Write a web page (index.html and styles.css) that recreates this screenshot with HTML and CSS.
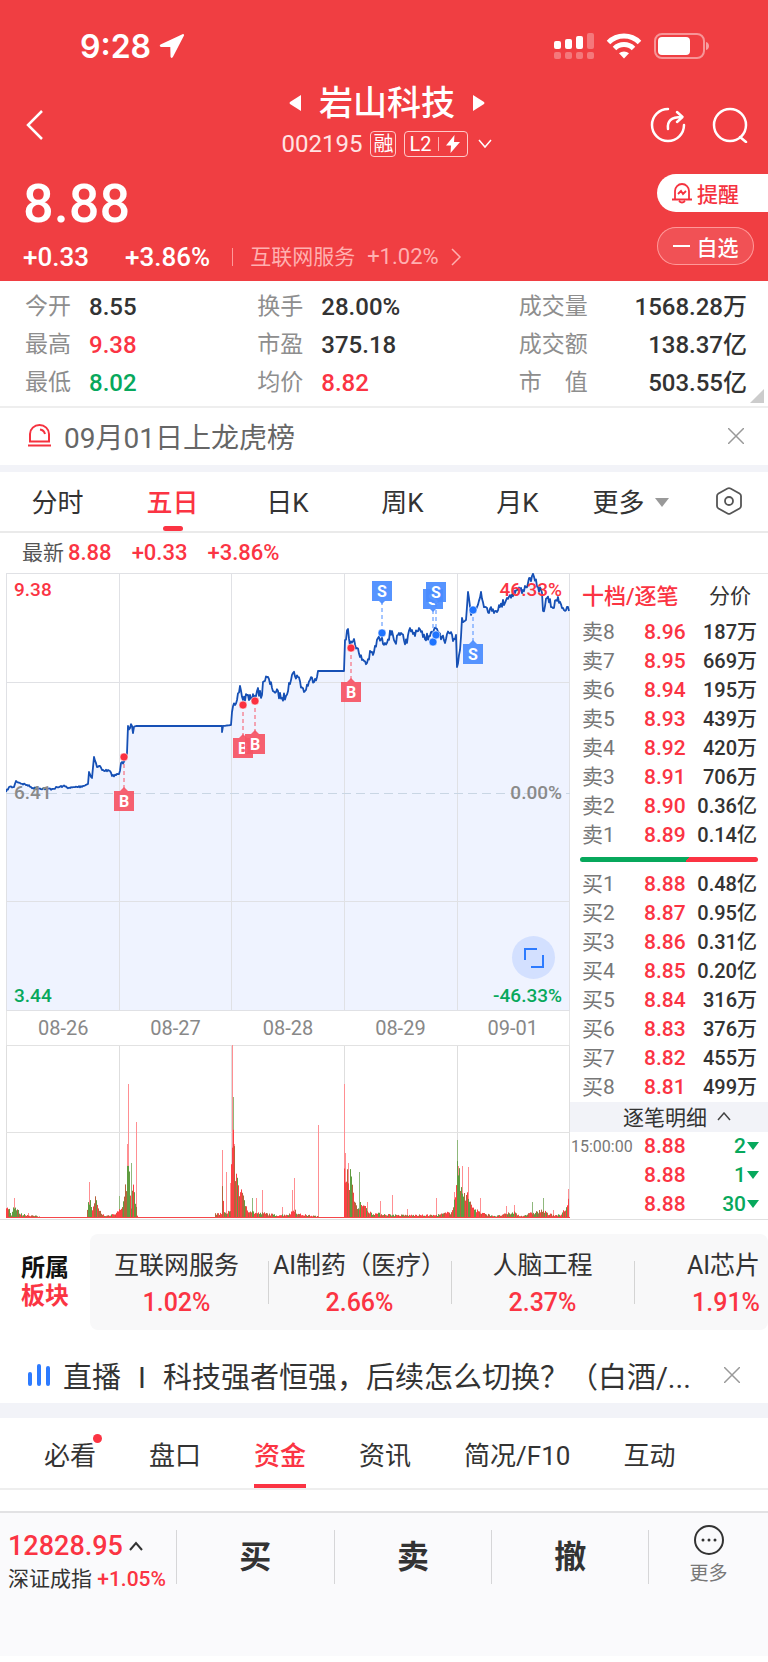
FILE: index.html
```html
<!DOCTYPE html>
<html lang="zh-CN">
<head>
  <meta charset="utf-8">
  <meta name="viewport" content="width=device-width, initial-scale=1">
  <title>岩山科技 002195</title>
  <link rel="stylesheet" href="styles.css">
</head>
<body>
  <header class="header">
    <div class="status">
      <span class="time">9:28</span>
      <svg class="locate" width="26" height="26" viewBox="0 0 26 26"><path d="M23.5 1.2 1.5 11.6c-1.2.7-.9 2.2.5 2.3l9.300.1.2 9.600c.1 1.500 1.800 1.800 2.400.5L25 2.600c.4-1-.5-1.900-1.500-1.400z" fill="#fff"/></svg>
      <svg width="40" height="28" viewBox="0 0 40 28" fill="#fff">
        <rect x="0" y="9" width="7" height="8" rx="2"/>
        <rect x="11" y="7" width="7" height="10" rx="2"/>
        <rect x="22" y="4" width="7" height="13" rx="2"/>
        <g opacity=".3">
          <rect x="33" y="1" width="7" height="16" rx="2"/>
          <rect x="0" y="20" width="7" height="7" rx="2"/>
          <rect x="11" y="20" width="7" height="7" rx="2"/>
          <rect x="22" y="20" width="7" height="7" rx="2"/>
          <rect x="33" y="20" width="7" height="7" rx="2"/>
        </g>
      </svg>
      <svg width="36" height="26" viewBox="0 0 36 26" fill="none" stroke="#fff" stroke-width="5">
        <path d="M2.500 9.500a22 22 0 0 1 31 0"/>
        <path d="M8.500 15.500a13.500 13.500 0 0 1 19 0"/>
        <path d="M18 25.500l-5-5.200a7.500 7.500 0 0 1 10 0z" fill="#fff" stroke="none"/>
      </svg>
      <svg width="56" height="26" viewBox="0 0 56 26">
        <rect x="1" y="1" width="49" height="24" rx="7" fill="none" stroke="#fff" stroke-width="2" opacity=".45"/>
        <rect x="4" y="4" width="32" height="18" rx="4" fill="#fff"/>
        <path d="M52 9c4 1 4 7 0 8z" fill="#fff" opacity=".5"/>
      </svg>
    </div>

    <div class="nav">
      <button class="icon-btn back" aria-label="返回">
        <svg width="18" height="30" viewBox="0 0 18 30" fill="none" stroke="#fff" stroke-width="2.500"><path d="M16 1 2 15l14 14"/></svg>
      </button>
      <div class="title">
        <div class="name">
          <button class="icon-btn" aria-label="上一只"><svg width="12" height="16" viewBox="0 0 12 16"><path d="M12 0v16L1 9q-1-1 0-2z" fill="#fff"/></svg></button>
          <h1>岩山科技</h1>
          <button class="icon-btn" aria-label="下一只"><svg width="12" height="16" viewBox="0 0 12 16"><path d="M0 0v16l11-7q1-1 0-2z" fill="#fff"/></svg></button>
        </div>
        <div class="code">
          <span>002195</span>
          <span class="badge">融</span>
          <span class="badge level">L2<i></i><svg width="14" height="18" viewBox="0 0 14 18"><path d="M8.500 0 0 10.500h5L4.500 18 14 7H8z" fill="#fff"/></svg></span>
          <svg class="down" width="14" height="10" viewBox="0 0 14 10" fill="none" stroke="#fff" stroke-width="1.500"><path d="M1 1l6 7 6-7"/></svg>
        </div>
      </div>
      <div class="tools">
        <button class="icon-btn" aria-label="分享">
          <svg width="36" height="36" viewBox="0 0 36 36" fill="none" stroke="#fff" stroke-width="2.500" stroke-linecap="round" stroke-linejoin="round"><path d="M18 2A16 16 0 1 0 34 18"/><path d="M18 22c-1-8 3-12 14-12M27 5l5.500 5-5.500 5"/></svg>
        </button>
        <button class="icon-btn" aria-label="搜索">
          <svg width="36" height="36" viewBox="0 0 36 36" fill="none" stroke="#fff" stroke-width="2.500" stroke-linecap="round"><circle cx="18" cy="18" r="16"/><path d="M28 30l6 5"/></svg>
        </button>
      </div>
    </div>

    <div class="quote">
      <div>
        <div class="price">8.88</div>
        <div class="change">
          <span>+0.33</span>
          <span>+3.86%</span>
          <a href="#sector">互联网服务 <b>+1.02%</b>
            <svg width="10" height="18" viewBox="0 0 10 18" fill="none" stroke="currentColor" stroke-width="1.500"><path d="M1 1l8 8-8 8"/></svg>
          </a>
        </div>
      </div>
      <div class="actions">
        <button class="remind">
          <svg width="20" height="22" viewBox="0 0 20 22" fill="none" stroke="#f5323f" stroke-width="1.800"><path d="M3 17V9a7 7 0 0 1 14 0v8M0 17.500h20M7 19q3 3 6 0M6 12l3-3 2 3 3-3"/></svg>
          提醒
        </button>
        <button class="watch"><i></i>自选</button>
      </div>
    </div>
  </header>

  <main>
    <dl class="stats">
      <div><dt>今开</dt><dd>8.55</dd></div>
      <div><dt>换手</dt><dd>28.00%</dd></div>
      <div><dt>成交量</dt><dd>1568.28万</dd></div>
      <div><dt>最高</dt><dd class="red">9.38</dd></div>
      <div><dt>市盈</dt><dd>375.18</dd></div>
      <div><dt>成交额</dt><dd>138.37亿</dd></div>
      <div><dt>最低</dt><dd class="green">8.02</dd></div>
      <div><dt>均价</dt><dd class="red">8.82</dd></div>
      <div><dt>市　值</dt><dd>503.55亿</dd></div>
    </dl>

    <div class="notice">
      <svg width="23" height="23" viewBox="0 0 23 23" fill="none" stroke="#f5323f" stroke-width="2"><path d="M2 17.500V10a9.500 9 0 0 1 19 0v7.500zM0 21.500h23M12 5.500q4 .5 5 4.500"/></svg>
      <a href="#lhb">09月01日上龙虎榜</a>
      <button class="icon-btn" aria-label="关闭"><svg width="16" height="16" viewBox="0 0 16 16" stroke="#999" stroke-width="1.500"><path d="M0 0l16 16M16 0 0 16"/></svg></button>
    </div>

    <nav class="periods">
      <button>分时</button>
      <button class="active">五日</button>
      <button>日K</button>
      <button>周K</button>
      <button>月K</button>
      <button class="more">更多<i></i></button>
      <button class="setting" aria-label="设置"><svg width="28" height="28" viewBox="0 0 28 28" fill="none" stroke="#555" stroke-width="1.800" stroke-linejoin="round"><path d="M12.500 1.500q1.500-.8 3 0l9 5q1.500.9 1.500 2.500v10q0 1.600-1.500 2.500l-9 5q-1.500.8-3 0l-9-5Q2 20.600 2 19V9q0-1.600 1.500-2.500z"/><circle cx="14" cy="14" r="4"/></svg></button>
    </nav>

    <div class="latest">最新<span>8.88</span><span>+0.33</span><span>+3.86%</span></div>

    <section class="market">
      <div class="chart">
        <div class="plot">
          <svg id="price" viewBox="0 0 564 438"></svg>
          <span class="tag top left red">9.38</span>
          <span class="tag top right red">46.33%</span>
          <span class="tag middle left">6.41</span>
          <span class="tag middle right">0.00%</span>
          <span class="tag bottom left green">3.44</span>
          <span class="tag bottom right green">-46.33%</span>
          <button class="full" aria-label="全屏"><svg width="20" height="20" viewBox="0 0 20 20" fill="none" stroke="#2d7bff" stroke-width="2"><path d="M1 12V1h12M19 7v12H7"/></svg></button>
        </div>
        <div class="dates">
          <span>08-26</span><span>08-27</span><span>08-28</span><span>08-29</span><span>09-01</span>
        </div>
        <svg id="volume" viewBox="0 0 564 174"></svg>
      </div>

      <aside class="book">
        <div class="book-tabs"><button class="active">十档/逐笔</button><button>分价</button></div>
        <table>
          <tr><th>卖8</th><td>8.96</td><td>187万</td></tr>
          <tr><th>卖7</th><td>8.95</td><td>669万</td></tr>
          <tr><th>卖6</th><td>8.94</td><td>195万</td></tr>
          <tr><th>卖5</th><td>8.93</td><td>439万</td></tr>
          <tr><th>卖4</th><td>8.92</td><td>420万</td></tr>
          <tr><th>卖3</th><td>8.91</td><td>706万</td></tr>
          <tr><th>卖2</th><td>8.90</td><td>0.36亿</td></tr>
          <tr><th>卖1</th><td>8.89</td><td>0.14亿</td></tr>
        </table>
        <div class="ratio"></div>
        <table>
          <tr><th>买1</th><td>8.88</td><td>0.48亿</td></tr>
          <tr><th>买2</th><td>8.87</td><td>0.95亿</td></tr>
          <tr><th>买3</th><td>8.86</td><td>0.31亿</td></tr>
          <tr><th>买4</th><td>8.85</td><td>0.20亿</td></tr>
          <tr><th>买5</th><td>8.84</td><td>316万</td></tr>
          <tr><th>买6</th><td>8.83</td><td>376万</td></tr>
          <tr><th>买7</th><td>8.82</td><td>455万</td></tr>
          <tr><th>买8</th><td>8.81</td><td>499万</td></tr>
        </table>
        <button class="detail">逐笔明细 <svg width="14" height="9" viewBox="0 0 14 9" fill="none" stroke="#444" stroke-width="1.500"><path d="M1 8l6-7 6 7"/></svg></button>
        <table class="ticks">
          <tr><th>15:00:00</th><td>8.88</td><td>2<i></i></td></tr>
          <tr><th></th><td>8.88</td><td>1<i></i></td></tr>
          <tr><th></th><td>8.88</td><td>30<i></i></td></tr>
        </table>
      </aside>
    </section>

    <section class="sectors" id="sector">
      <h2>所属<em>板块</em></h2>
      <div class="sector-list">
        <a href="#s1">互联网服务<b>1.02%</b></a>
        <a href="#s2">AI制药（医疗）<b>2.66%</b></a>
        <a href="#s3">人脑工程<b>2.37%</b></a>
        <a href="#s4">AI芯片<b>1.91%</b></a>
      </div>
    </section>

    <div class="live">
      <svg width="22" height="22" viewBox="0 0 22 22" fill="#2d7bff"><rect y="8" width="4" height="14" rx="2"/><rect x="9" width="4" height="22" rx="2"/><rect x="18" y="2" width="4" height="20" rx="2"/></svg>
      <a href="#live"><span>直播</span><span>I</span>科技强者恒强，后续怎么切换？（白酒/...</a>
      <button class="icon-btn" aria-label="关闭"><svg width="16" height="16" viewBox="0 0 16 16" stroke="#999" stroke-width="1.500"><path d="M0 0l16 16M16 0 0 16"/></svg></button>
    </div>

    <nav class="sections">
      <button class="new">必看</button>
      <button>盘口</button>
      <button class="active">资金</button>
      <button>资讯</button>
      <button>简况/F10</button>
      <button>互动</button>
    </nav>
  </main>

  <footer class="footer">
    <div class="index">
      <div class="point">12828.95<svg width="14" height="10" viewBox="0 0 14 10" fill="none" stroke="#333" stroke-width="2"><path d="M1 9l6-7 6 7"/></svg></div>
      <div class="index-name">深证成指 <span>+1.05%</span></div>
    </div>
    <button class="trade">买</button>
    <button class="trade">卖</button>
    <button class="trade">撤</button>
    <button class="more">
      <svg width="32" height="32" viewBox="0 0 32 32" fill="#333"><circle cx="16" cy="16" r="14" fill="none" stroke="#333" stroke-width="2"/><circle cx="10" cy="16" r="1.500"/><circle cx="16" cy="16" r="1.500"/><circle cx="22" cy="16" r="1.500"/></svg>
      更多
    </button>
  </footer>

  <script src="chart.js"></script>
</body>
</html>
```
FILE: styles.css
```css
* {
  box-sizing: border-box;
}
body {
  margin: 0;
  background: #fff;
  color: #333;
  font-family: Roboto, "Noto Sans CJK SC", sans-serif;
  font-size: 21px;
}
button {
  border: 0;
  padding: 0;
  background: none;
  color: inherit;
  font: inherit;
  cursor: pointer;
}
a {
  color: inherit;
  text-decoration: none;
}
svg {
  display: block;
  flex-shrink: 0;
}
h1, h2, dl, dd {
  margin: 0;
}
.red {
  color: #fb3443;
}
.green {
  color: #07a85c;
}
.icon-btn {
  display: flex;
}

/* header */
.header {
  background: #f03e42;
  color: #fff;
  height: 281px;
}
.status {
  display: flex;
  align-items: center;
  gap: 12px;
  height: 90px;
  padding: 2px 58px 0 80px;
}
.time {
  font: 600 32px Inter, sans-serif;
}
.locate {
  margin-left: -4px;
  margin-right: auto;
}
.nav {
  display: grid;
  grid-template-columns: 1fr auto 1fr;
  align-items: center;
  height: 70px;
  padding: 0 20px 0 26px;
}
.tools {
  display: flex;
  justify-content: flex-end;
  gap: 26px;
}
.name {
  display: flex;
  align-items: center;
  justify-content: center;
  gap: 18px;
  height: 40px;
  margin-top: -10px;
}
h1 {
  font-size: 34px;
  font-weight: 500;
  line-height: 40px;
}
.code {
  display: flex;
  align-items: center;
  justify-content: center;
  gap: 8px;
  margin-top: 8px;
  line-height: 26px;
  font-size: 24px;
  color: #ffe3e3;
}
.badge {
  display: flex;
  align-items: center;
  height: 26px;
  border: 1px solid #ffc9c9;
  border-radius: 4px;
  padding: 0 2px;
  font-size: 20px;
  color: #fff;
}
.level {
  gap: 7px;
  padding: 0 7px 0 4px;
}
.level i {
  width: 1px;
  height: 14px;
  background: #ffb3b3;
}
.down {
  margin-left: 2px;
}
.quote {
  display: flex;
  justify-content: space-between;
  padding: 14px 0 0 23px;
}
.price {
  font-size: 54px;
  font-weight: 500;
  line-height: 60px;
}
.change {
  display: flex;
  align-items: center;
  margin-top: 8px;
  font-size: 26px;
  font-weight: 500;
  line-height: 30px;
}
.change span {
  margin-right: 36px;
}
.change span + span {
  margin-right: 22px;
}
.change a {
  display: flex;
  align-items: center;
  gap: 12px;
  font-size: 21px;
  font-weight: 400;
  color: #ffb0b0;
}
.change a::before {
  content: "";
  width: 1px;
  height: 18px;
  margin-right: 5px;
  background: #f99;
}
.change b {
  font-size: 22px;
  font-weight: 400;
}
.actions {
  width: 111px;
}
.actions button {
  display: flex;
  align-items: center;
  height: 38px;
  font-size: 21px;
  font-weight: 500;
}
.actions .remind {
  gap: 5px;
  width: 100%;
  padding-left: 15px;
  border-radius: 19px 0 0 19px;
  background: #fff;
  color: #f5323f;
}
.actions .watch {
  justify-content: center;
  gap: 7px;
  width: 97px;
  margin-top: 15px;
  border-radius: 19px;
  background: rgba(255, 255, 255, .1);
  box-shadow: inset 0 0 0 1px #f99;
}
.watch i {
  width: 17px;
  height: 2px;
  background: #fff;
}

/* stats */
.stats {
  position: relative;
  display: grid;
  grid-template-columns: 232fr 261fr 228fr;
  padding: 7px 21px 4px 25px;
  border-bottom: 2px solid #eee;
}
.stats div {
  display: flex;
  gap: 18px;
  line-height: 38px;
}
.stats dt {
  font-size: 23px;
  color: #8e8e8e;
}
.stats dd {
  font-size: 24px;
  font-weight: 500;
}
.stats div:nth-child(3n) dd {
  margin-left: auto;
}
.stats::after {
  content: "";
  position: absolute;
  right: 4px;
  bottom: 3px;
  border: 7px solid #ccc;
  border-top-color: transparent;
  border-left-color: transparent;
}

/* notice and live lines */
.notice, .live {
  display: flex;
  align-items: center;
  gap: 13px;
  height: 64px;
  padding: 0 24px 2px 28px;
  border-bottom: 7px solid #f2f3f8;
  font-size: 28px;
  color: #666;
}
.notice a, .live a {
  flex: 1;
  overflow: hidden;
  white-space: nowrap;
}
.live {
  height: 88px;
  padding: 16px 28px 0;
  border-bottom-width: 15px;
  font-size: 29px;
  color: #333;
}
.live span {
  margin-right: 17px;
}

/* period tabs */
.periods {
  display: grid;
  grid-template-columns: repeat(5, 115fr) 115fr 78fr;
  height: 61px;
  border-bottom: 2px solid #eaeaea;
  font-size: 26px;
}
.periods button {
  padding-bottom: 2px;
}
.active {
  color: #fb3443;
  font-weight: 500;
}
.periods .active {
  position: relative;
}
.periods .active::after {
  content: "";
  position: absolute;
  left: 50%;
  bottom: 0;
  width: 20px;
  height: 5px;
  margin-left: -10px;
  border-radius: 3px;
  background: #fb3443;
}
.more {
  white-space: nowrap;
}
.periods .more i {
  display: inline-block;
  margin: 0 4px 5px 10px;
  border: 7px solid transparent;
  border-top: 9px solid #999;
  border-bottom: 0;
}
.setting {
  display: flex;
  align-items: center;
  justify-content: center;
}
.latest {
  height: 40px;
  padding-left: 22px;
  line-height: 40px;
  color: #555;
}
.latest span {
  margin: 0 16px 0 4px;
  font-size: 22px;
  font-weight: 500;
  color: #fb3443;
}

/* chart */
.market {
  display: grid;
  grid-template-columns: 1fr 198px;
  border-bottom: 1px solid #e0e0e0;
}
.chart {
  padding-left: 6px;
}
.plot {
  position: relative;
}
.tag {
  position: absolute;
  font-size: 19px;
  font-weight: 500;
  line-height: 20px;
}
.top { top: 7px; }
.middle { top: 210px; color: #8a8a8a; }
.bottom { bottom: 5px; }
.left { left: 8px; }
.right { right: 8px; }
.full {
  position: absolute;
  right: 15px;
  bottom: 32px;
  display: flex;
  align-items: center;
  justify-content: center;
  width: 43px;
  height: 43px;
  border-radius: 50%;
  background: #d3e0ff;
}
.dates {
  display: grid;
  grid-template-columns: repeat(5, 1fr);
  border: solid #e6e6e6;
  border-width: 0 1px;
  line-height: 34px;
  text-align: center;
  font-size: 20px;
  color: #888;
}

/* order book */
.book {
  border-top: 1px solid #e6e6e6;
}
.book-tabs {
  display: flex;
  justify-content: space-between;
  height: 44px;
  padding: 0 17px 5px 12px;
}
.book-tabs .active {
  font-size: 22px;
}
.book table {
  width: 100%;
  border-collapse: collapse;
  table-layout: fixed;
}
.book th, .book td {
  height: 29px;
  padding: 0;
  line-height: 29px;
  font-size: 21px;
}
.book th {
  width: 74px;
  padding-left: 12px;
  text-align: left;
  font-weight: 400;
  color: #777;
}
.book td {
  font-weight: 500;
  color: #fb3443;
}
.book td + td {
  width: 84px;
  padding-right: 11px;
  text-align: right;
  font-size: 20px;
  color: #333;
}
.ratio {
  height: 5px;
  margin: 7px 10px 8px;
  border-radius: 3px;
  background: linear-gradient(125deg, #07a85c 60%, #fb3443 60%);
}
.detail {
  display: flex;
  align-items: center;
  justify-content: center;
  gap: 10px;
  width: 100%;
  height: 30px;
  padding: 0 0 2px 16px;
  background: #f2f3f8;
}
.book .ticks th {
  padding-left: 1px;
  font-size: 16px;
}
.book .ticks td + td {
  padding-right: 9px;
  font-size: 21px;
  color: #07a85c;
}
.ticks i {
  display: inline-block;
  margin: 0 0 3px 1px;
  border: 6px solid transparent;
  border-top: 8px solid #07a85c;
  border-bottom: 0;
}

/* sectors */
.sectors {
  display: flex;
  align-items: center;
  margin-top: 14px;
}
h2 {
  width: 90px;
  padding-left: 21px;
  font-size: 24px;
  line-height: 28px;
  color: #111;
}
h2 em {
  display: block;
  font-style: normal;
  color: #fb3443;
}
.sector-list {
  flex: 1;
  display: flex;
  height: 96px;
  overflow: hidden;
  border-radius: 8px;
  background: #f8f8f9;
  text-align: center;
  white-space: nowrap;
}
.sector-list a {
  flex: 0 0 183px;
  position: relative;
  padding-top: 13px;
  font-size: 25px;
  line-height: 37px;
}
.sector-list a:last-child {
  flex: 1;
  padding-right: 8px;
  text-align: right;
}
.sector-list a:first-child {
  margin-left: -5px;
}
.sector-list a + a::before {
  content: "";
  position: absolute;
  left: 0;
  top: 27px;
  width: 1px;
  height: 43px;
  background: #d4d4d4;
}
.sector-list b {
  display: block;
  font-weight: 500;
  color: #fb3443;
}

/* section tabs */
.sections {
  display: flex;
  gap: 53px;
  height: 72px;
  padding-left: 44px;
  border-bottom: 2px solid #eee;
  font-size: 26px;
}
.sections button {
  position: relative;
}
.sections .active {
  box-shadow: inset 0 -4px #fb3443;
}
.new::after {
  content: "";
  position: absolute;
  top: 16px;
  right: -6px;
  width: 9px;
  height: 9px;
  border-radius: 50%;
  background: #fb3443;
}

/* bottom bar */
.footer {
  display: grid;
  grid-template-columns: 176px 1fr 1fr 1fr 119px;
  margin-top: 21px;
  padding: 17px 0 64px;
  border-top: 2px solid #e2e2e4;
  background: #fafafc;
}
.footer > * {
  height: 54px;
}
.footer .trade {
  border-left: 1px solid #d6d6d8;
  padding-bottom: 6px;
  font-size: 32px;
  font-weight: 700;
}
.footer .trade:nth-child(4) {
  border-right: 1px solid #d6d6d8;
}
.index {
  padding-left: 8px;
  white-space: nowrap;
}
.point {
  display: flex;
  align-items: center;
  gap: 6px;
  font-size: 27px;
  font-weight: 500;
  line-height: 32px;
  color: #fb3443;
}
.index-name {
  font-size: 21px;
  line-height: 34px;
}
.index-name span {
  font-weight: 500;
  color: #fb3443;
}
.footer .more {
  display: flex;
  flex-direction: column;
  align-items: center;
  height: 68px;
  margin-top: -6px;
  font-size: 19px;
  line-height: 36px;
  color: #777;
}
```
FILE: chart.js
```js
var days = [0, 113, 225, 338, 451, 563]

// price line, [x, y] pairs
var line = [
  [0, 219], [3, 214], [8, 214], [10, 208], [14, 210], [21, 212], [27, 215], [46, 216], [57, 213], [64, 215],
  [77, 213], [82, 211], [83, 199], [86, 205], [88, 184], [91, 194], [94, 193], [96, 197], [104, 198], [106, 203],
  [113, 201], [116, 189], [121, 180], [122, 153], [126, 153], [127, 160], [130, 153], [216, 153], [216, 159],
  [217, 153], [225, 152], [226, 139], [229, 132], [231, 127], [234, 113], [237, 127], [241, 122], [246, 127],
  [251, 118], [256, 122], [257, 109], [261, 104], [266, 115], [276, 125], [280, 123], [283, 110], [287, 100],
  [292, 104], [298, 119], [304, 107], [311, 104], [312, 98], [338, 98], [339, 67], [342, 56], [344, 73],
  [348, 66], [354, 84], [361, 90], [365, 79], [367, 82], [372, 65], [379, 70], [386, 58], [389, 69], [394, 62],
  [401, 70], [404, 55], [407, 61], [413, 55], [417, 64], [424, 63], [431, 56], [436, 64], [439, 70], [443, 60],
  [448, 66], [450, 62], [451, 94], [454, 77], [456, 45], [460, 47], [462, 19], [465, 42], [467, 37], [471, 34],
  [475, 19], [479, 34], [486, 38], [494, 34], [501, 25], [511, 17], [517, 17], [522, 10], [526, 3], [532, 14],
  [536, 20], [537, 38], [541, 25], [547, 35], [552, 24], [557, 35], [563, 38]
]
// type, x, dot y, box y
var marks = [
  ['B', 118, 184, 218], ['B', 237, 132, 165], ['B', 249, 128, 161], ['B', 345, 75, 109],
  ['S', 376, 60, 8], ['S', 427, 69, 16], ['S', 430, 62, 9], ['S', 467, 37, 71]
]
// volume base, [x, height] pairs
var volume = [
  [0, 10], [2, 12], [5, 4], [8, 14], [10, 9], [15, 4], [30, 2], [35, 1], [80, 1], [82, 20], [84, 18], [86, 7],
  [88, 24], [91, 12], [95, 5], [99, 2], [106, 4], [113, 8], [118, 20], [121, 50], [123, 60], [125, 12],
  [127, 36], [129, 20], [131, 2], [132, 1], [208, 1], [209, 4], [215, 5], [216, 30], [218, 5], [224, 8],
  [226, 100], [228, 60], [232, 38], [236, 22], [242, 9], [250, 5], [258, 5], [270, 3], [283, 4], [288, 10],
  [292, 4], [310, 2], [313, 1], [337, 1], [338, 60], [340, 55], [345, 38], [348, 20], [351, 10], [355, 18],
  [360, 9], [366, 5], [378, 4], [392, 3], [430, 3], [444, 6], [448, 18], [451, 50], [455, 34], [459, 28],
  [463, 18], [468, 10], [475, 5], [490, 2], [508, 6], [514, 2], [536, 8], [542, 4], [554, 3], [560, 10], [563, 25]
]
// spikes, [x, height, green]
var spikes = [
  [8, 20], [22, 5], [83, 36], [113, 22, 1], [121, 74], [122, 134], [125, 55, 1], [130, 96], [216, 68], [220, 46],
  [224, 35], [226, 173], [227, 121, 1], [228, 74], [246, 20, 1], [250, 20], [256, 28], [276, 11], [286, 28],
  [288, 40], [312, 93], [338, 134], [339, 65], [342, 55], [344, 42, 1], [353, 46, 1], [361, 16], [374, 17],
  [386, 23], [401, 9], [430, 20], [448, 26], [451, 78, 1], [452, 52], [456, 52], [462, 51], [474, 20], [500, 12],
  [508, 13], [526, 16, 1], [537, 20, 1], [547, 8], [562, 29]
]

var seed = 7
function rand() {
  seed = (seed * 16807) % 2147483647
  return seed / 2147483647
}
function rect(x, y, w, h, fill) {
  return '<rect x="' + x + '" y="' + y + '" width="' + w + '" height="' + h + '" fill="' + fill + '"/>'
}
// walk from one pair to the next, one pixel at a time
function walk(list, fn) {
  for (var i = 0; i < list.length - 1; i++) {
    var a = list[i], b = list[i + 1]
    for (var x = a[0]; x < b[0]; x++) {
      fn(x, a[1] + (b[1] - a[1]) * (x - a[0]) / (b[0] - a[0]), x === a[0])
    }
    if (a[0] === b[0]) fn(a[0], a[1], true)
  }
}

function drawPrice() {
  var points = []
  walk(line, function(x, y, exact) {
    var flat = (x > 130 && x < 225) || (x > 312 && x < 338)
    var size = x < 113 ? 2 : 8
    points.push(x + ',' + (exact || flat ? y : y + (rand() - .5) * size).toFixed(1))
  })
  points.push('563,38')
  var html = '<polygon points="0,438 ' + points.join(' ') + ' 563,438" fill="#eff3ff"/>'
  days.forEach(function(x) {
    html += rect(x, 0, 1, 438, '#e0e1e5')
  })
  ;[0, 109, 328, 437].forEach(function(y) {
    html += rect(0, y, 564, 1, '#e0e1e5')
  })
  html += '<path d="M0 220.5h564" stroke="#c9d6e4" stroke-dasharray="9 5"/>'
  html += '<polyline points="' + points.join(' ') + '" fill="none" stroke="#1650b5" stroke-width="1.8" stroke-linejoin="round"/>'
  marks.forEach(function(m) {
    var below = m[3] > m[2]
    var color = m[0] === 'B' ? '#f75566' : '#4a8cff'
    var dot = m[0] === 'B' ? '#fb3040' : '#1f74ff'
    var x = m[1], y = m[3]
    var tip = below ? 'M' + (x - 4) + ' ' + y + 'l4-4 4 4z' : 'M' + (x - 4) + ' ' + (y + 19) + 'l4 4 4-4z'
    html += '<path d="M' + x + ' ' + m[2] + 'V' + (below ? y : y + 20) + '" stroke="' + color + '" stroke-dasharray="4 3"/>'
    html += '<g opacity=".93"><path d="' + tip + '" fill="' + color + '"/>' + rect(x - 10, y, 20, 20, color) + '</g>'
    html += '<text x="' + x + '" y="' + (y + 16) + '">' + m[0] + '</text>'
    html += '<circle cx="' + x + '" cy="' + m[2] + '" r="4" fill="' + dot + '" stroke="#fff" stroke-width=".5"/>'
  })
  var svg = document.getElementById('price')
  svg.innerHTML = html
  svg.querySelectorAll('text').forEach(function(t) {
    t.setAttribute('fill', '#fff')
    t.setAttribute('font-size', '16')
    t.setAttribute('font-weight', '700')
    t.setAttribute('text-anchor', 'middle')
  })
}

function drawVolume() {
  var html = ''
  days.forEach(function(x) {
    html += rect(x, 0, 1, 173, '#dedede')
  })
  ;[0, 87].forEach(function(y) {
    html += rect(0, y, 564, 1, '#e2e2e2')
  })
  spikes.forEach(function(s) {
    html += rect(s[0], 173 - s[1], 1, s[1], s[2] ? '#8fb87c' : '#ff8f92')
  })
  walk(volume, function(x, h) {
    var top = h > 1 ? h * (.6 + rand() * .6) : h
    var r = rand()
    html += rect(x, (173 - top).toFixed(1), 1, top.toFixed(1), r < .45 || h <= 1 ? '#fb4044' : r < .75 ? '#b5633c' : '#5f9c40')
  })
  html += rect(0, 172, 564, 1, '#f5464a')
  document.getElementById('volume').innerHTML = html
}

drawPrice()
drawVolume()
```
